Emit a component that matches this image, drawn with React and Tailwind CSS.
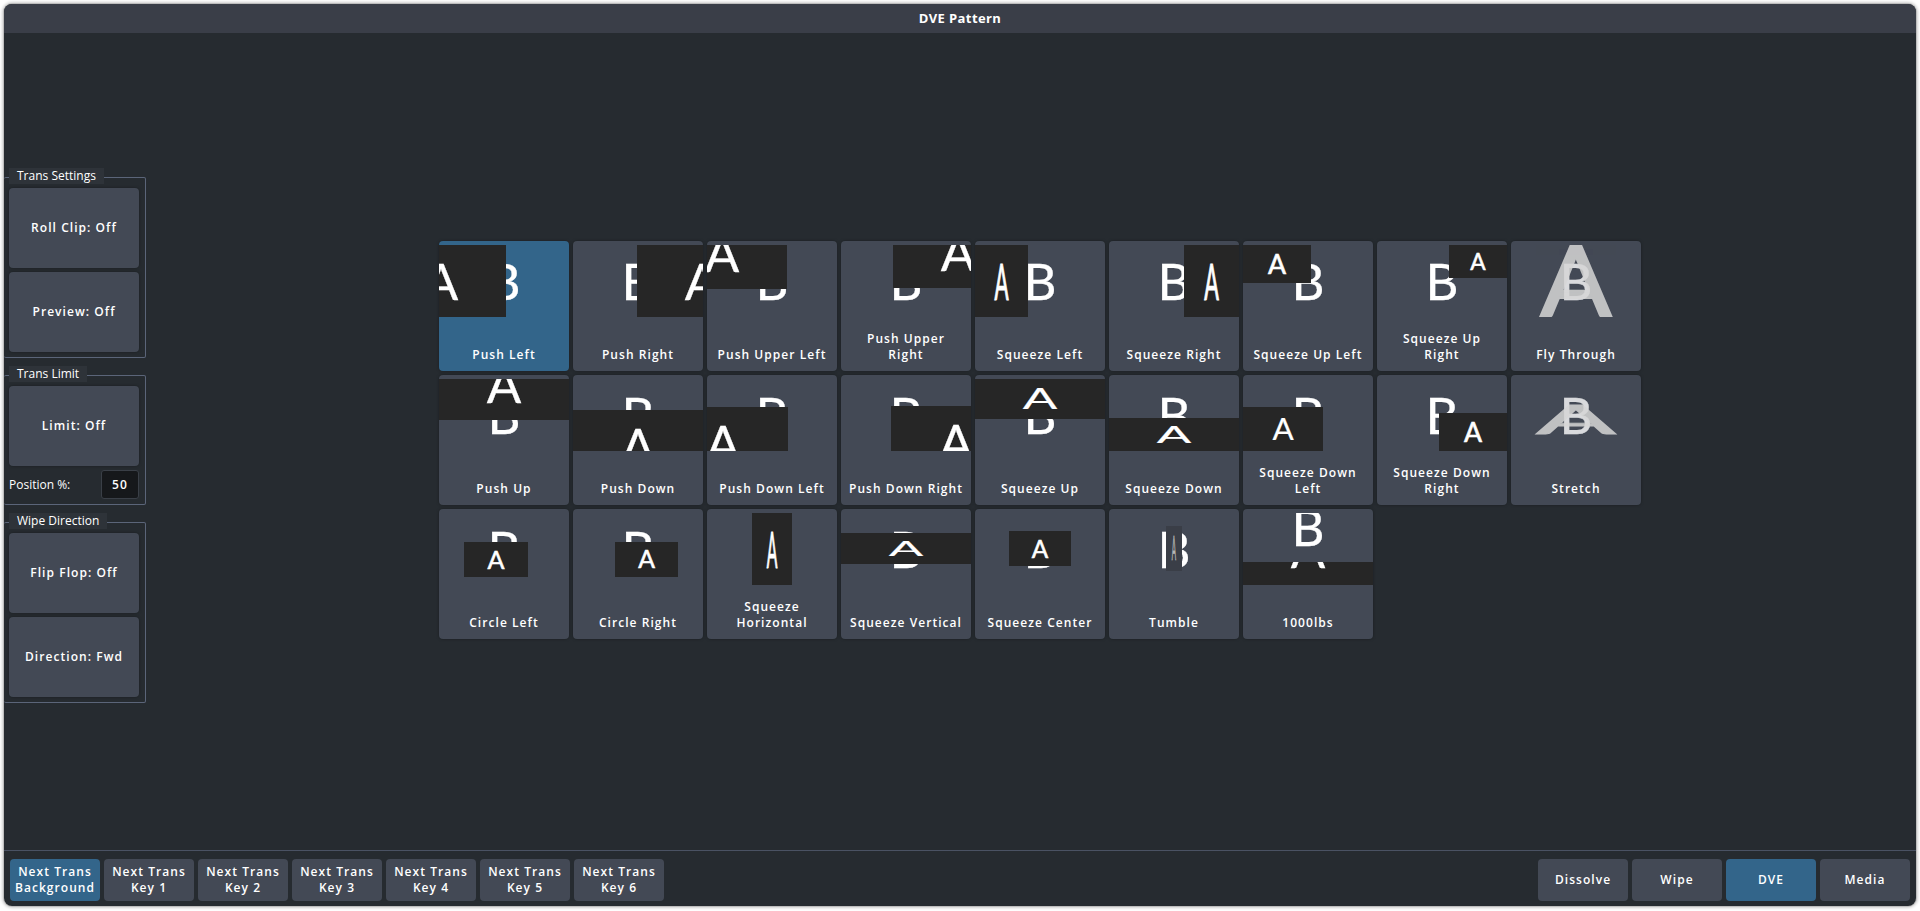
import React from "react";

// x, y, w, h = A frame inside the 130x72 preview, in px
const rows = [
  [
    { name: "Push Left", box: [-63, 0, 130, 72] },
    { name: "Push Right", box: [64, 0, 130, 72] },
    { name: "Push Upper Left", box: [-50, -28, 130, 72] },
    { name: "Push Upper Right", box: [52, -29, 130, 72] },
    { name: "Squeeze Left", box: [0, 0, 53, 72] },
    { name: "Squeeze Right", box: [75, 0, 55, 72] },
    { name: "Squeeze Up Left", box: [0, 0, 68, 38] },
    { name: "Squeeze Up Right", box: [72, 0, 58, 33] },
    { name: "Fly Through", ghost: { sx: 2.08, sy: 1.95, cy: 36 }, bOpacity: 0.8 },
  ],
  [
    { name: "Push Up", box: [0, -31, 130, 72] },
    { name: "Push Down", box: [0, 31, 130, 72] },
    { name: "Push Down Left", box: [-49, 28, 130, 72] },
    { name: "Push Down Right", box: [50, 27, 130, 72] },
    { name: "Squeeze Up", box: [0, 0, 130, 40] },
    { name: "Squeeze Down", box: [0, 39, 130, 33] },
    { name: "Squeeze Down Left", box: [0, 28, 80, 44] },
    { name: "Squeeze Down Right", box: [62, 34, 68, 38] },
    { name: "Stretch", ghost: { sx: 2.3, sy: 0.8, cy: 39.7 }, bOpacity: 0.8 },
  ],
  [
    { name: "Circle Left", box: [25, 29, 64, 35] },
    { name: "Circle Right", box: [42, 29, 63, 35] },
    { name: "Squeeze Horizontal", box: [45, 0, 40, 72] },
    { name: "Squeeze Vertical", box: [0, 20, 130, 31] },
    { name: "Squeeze Center", box: [34, 18, 62, 35] },
    { name: "Tumble", box: [57, 13, 16, 45], boxFill: "#3a3e47", aFill: "#b5b5b5" },
    { name: "1000lbs", box: [0, 49, 130, 23], bDy: -22, aCy: -13, aScale: [1, 1] },
  ],
];

const letter = "font-['Lato',sans-serif]";

// letters are set at 51px, cap height about 37
const Letter = ({ ch, cx, cy, sx = 1, sy = 1, fill = "#fff", opacity, weight = 0.3 }) => (
  <text
    transform={`translate(${cx} ${cy}) scale(${sx} ${sy})`}
    y="18.5"
    textAnchor="middle"
    fontSize="51"
    fill={fill}
    opacity={opacity}
    stroke={fill}
    strokeWidth={weight}
    className={letter}
  >
    {ch}
  </text>
);

const Preview = ({ box, ghost, boxFill = "#262626", aFill, bOpacity, bDy = 0, aCy, aScale }) => {
  let frame = null;
  if (ghost) {
    frame = <Letter ch="A" cx={65} cy={ghost.cy} sx={ghost.sx} sy={ghost.sy} fill="#d6d6d6" opacity="0.85" weight={1.2} />;
  } else if (box) {
    const [x, y, w, h] = box;
    const sx = aScale ? aScale[0] : w / 130;
    const sy = aScale ? aScale[1] : h / 72;
    frame = (
      <svg x={x} y={y} width={w} height={h} viewBox={`0 0 ${w} ${h}`}>
        <rect width={w} height={h} fill={boxFill} />
        <Letter
          ch="A"
          cx={w / 2}
          cy={aCy !== undefined ? aCy : h / 2}
          sx={sx}
          sy={sy}
          fill={aFill}
          weight={sx < 0.6 ? 1.2 : 0.3}
        />
      </svg>
    );
  }
  return (
    <svg width="130" height="72" viewBox="0 0 130 72" className="block">
      <Letter ch="B" cx={65} cy={36 + bDy} opacity={bOpacity} />
      {frame}
    </svg>
  );
};

const PatternTile = ({ item, selected }) => (
  <button
    className={`relative flex h-[130px] w-[130px] flex-col overflow-hidden rounded-[4px] pt-[4px] shadow-[0_0_3px_rgba(0,0,0,0.35)] ${
      selected ? "bg-[#33658a]" : "bg-[#434955]"
    }`}
  >
    <Preview {...item} />
    <span className="flex flex-1 items-end justify-center px-[7px] pb-[8px] text-center text-[12px] leading-[16px] font-semibold tracking-[1.05px] text-white">
      {item.name}
    </span>
  </button>
);

const SideButton = ({ children }) => (
  <button className="flex h-[80px] w-[130px] items-center justify-center rounded-[4px] bg-[#434955] text-[12px] font-semibold tracking-[1.05px] text-white shadow-[0_0_3px_rgba(0,0,0,0.35)]">
    {children}
  </button>
);

const Group = ({ title, children }) => (
  <fieldset className="w-[142px] rounded-[2px] border border-l-0 border-[#5b6579] pr-[6px] pb-[5px] pl-[5px]">
    <legend className="h-[18px]">
      <span className="block h-[16px] bg-[#2e3339] px-[8px] text-[12px] leading-[16px] text-white">{title}</span>
    </legend>
    <div className="mt-[2px] flex flex-col gap-[4px]">{children}</div>
  </fieldset>
);

const BarButton = ({ children, selected }) => (
  <button
    className={`flex h-[42px] w-[90px] items-center justify-center rounded-[4px] text-center text-[12px] leading-[16px] font-semibold tracking-[1.05px] text-white ${
      selected ? "bg-[#33658a]" : "bg-[#434955]"
    }`}
  >
    {children}
  </button>
);

export default function App() {
  return (
    <div className="h-[911px] w-[1920px] overflow-hidden bg-white p-[4px] pb-[5px] font-['Open_Sans',sans-serif]">
      <div className="flex h-full flex-col overflow-hidden rounded-[8px] bg-[#262b30] shadow-[0_0_0_1px_#bdbdbd,0_0_3px_2px_#cfcfcf]">
        <div className="flex h-[29px] shrink-0 items-center justify-center bg-[#3a3e48] text-[13px] font-bold tracking-[0.4px] text-white">
          DVE Pattern
        </div>

        <div className="flex min-h-0 flex-1">
          <div className="flex w-[160px] shrink-0 flex-col justify-center gap-[8px] pb-[12px]">
            <Group title="Trans Settings">
              <SideButton>Roll Clip: Off</SideButton>
              <SideButton>Preview: Off</SideButton>
            </Group>
            <Group title="Trans Limit">
              <SideButton>Limit: Off</SideButton>
              <div className="flex h-[29px] items-center justify-between">
                <span className="text-[12px] text-white">Position %:</span>
                <div className="flex h-[29px] w-[38px] items-center justify-center rounded-[3px] border border-[#3a3f47] bg-[#16181b] text-[12px] font-semibold tracking-[1.05px] text-white">
                  50
                </div>
              </div>
            </Group>
            <Group title="Wipe Direction">
              <SideButton>Flip Flop: Off</SideButton>
              <SideButton>Direction: Fwd</SideButton>
            </Group>
          </div>

          <div className="flex flex-1 flex-col items-center justify-center gap-[4px] pb-[3px]">
            <div className="grid grid-cols-9 gap-[4px]">
              {rows.flat().map((item, i) => (
                <PatternTile key={item.name} item={item} selected={i === 0} />
              ))}
            </div>
          </div>
        </div>

        <div className="flex h-[56px] shrink-0 items-start justify-between border-t border-[#4a5263] px-[6px] pt-[8px]">
          <div className="flex gap-[4px]">
            <BarButton selected>Next Trans<br />Background</BarButton>
            {[1, 2, 3, 4, 5, 6].map((n) => (
              <BarButton key={n}>Next Trans<br />Key {n}</BarButton>
            ))}
          </div>
          <div className="flex gap-[4px]">
            <BarButton>Dissolve</BarButton>
            <BarButton>Wipe</BarButton>
            <BarButton selected>DVE</BarButton>
            <BarButton>Media</BarButton>
          </div>
        </div>
      </div>
    </div>
  );
}
